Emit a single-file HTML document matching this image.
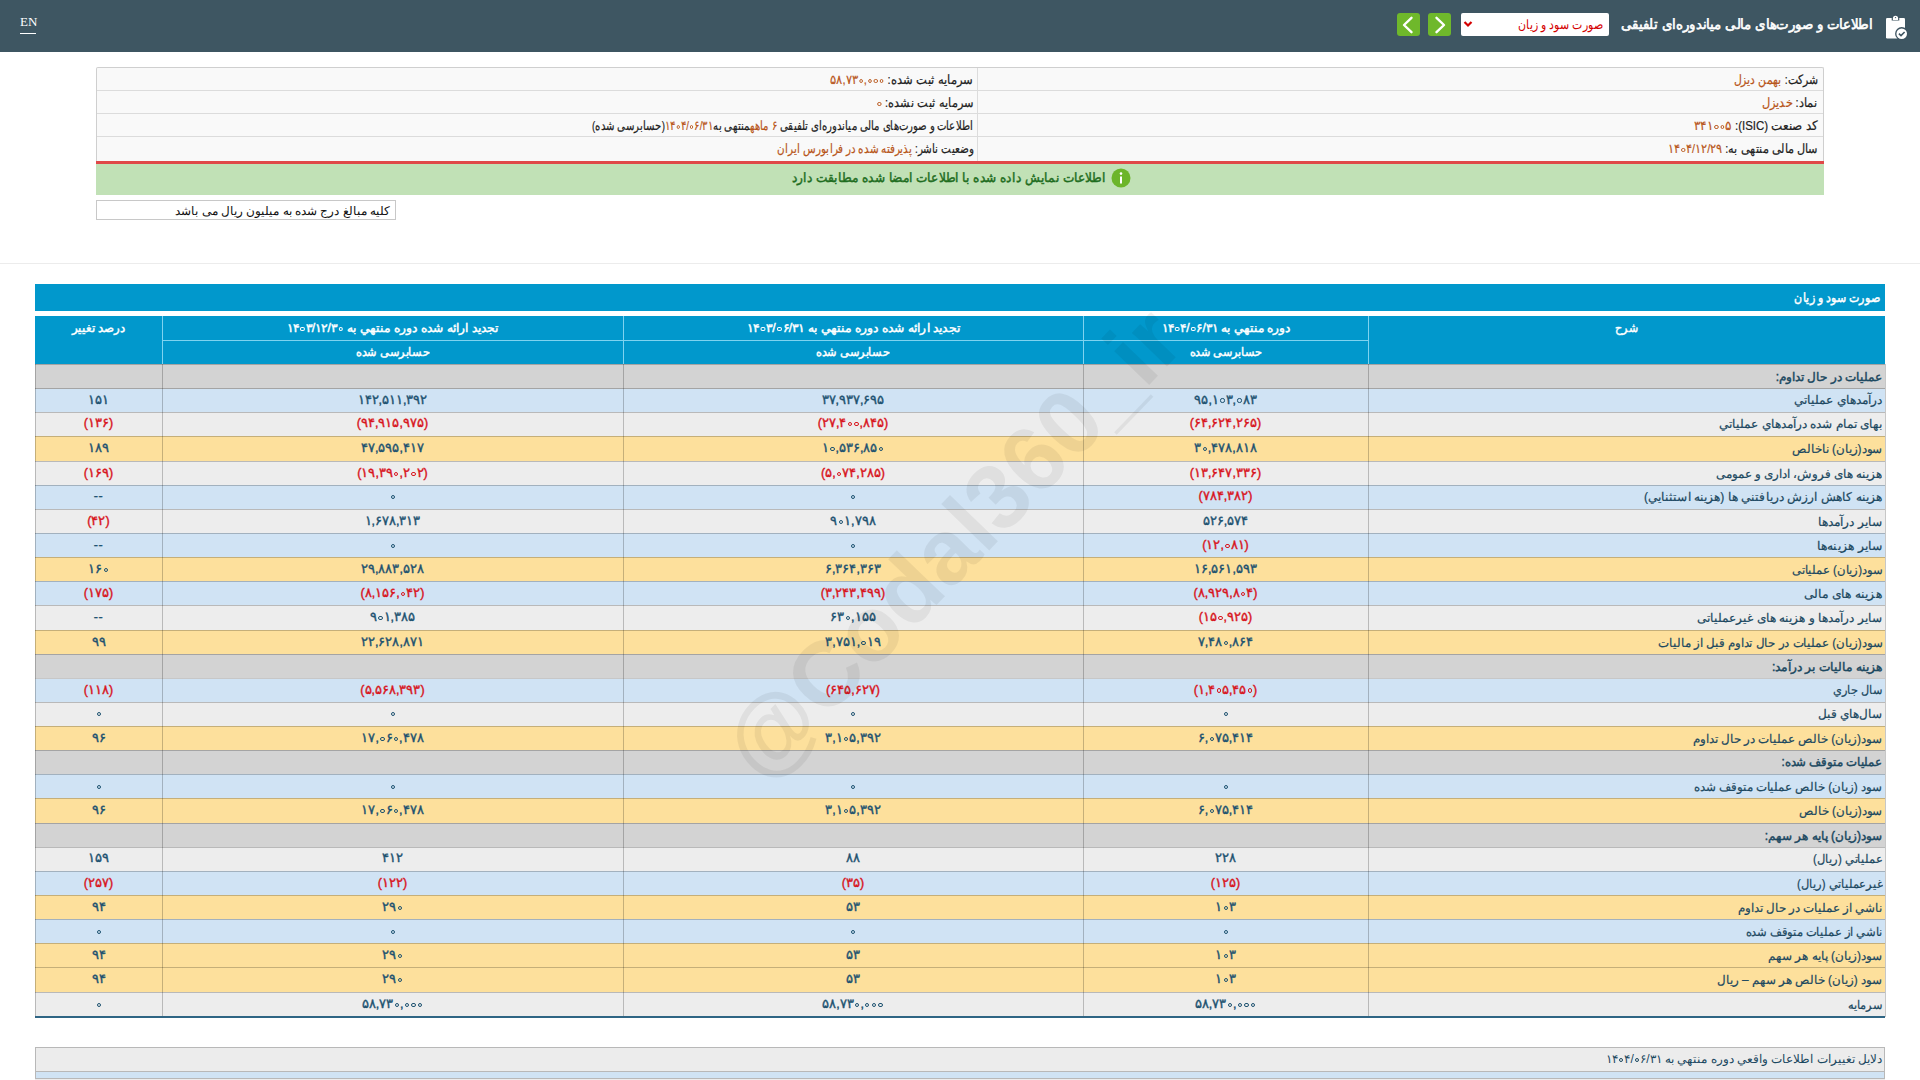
<!DOCTYPE html><html><head><meta charset="utf-8"><title>Codal</title><style>
*{margin:0;padding:0;box-sizing:border-box}
html,body{width:1920px;height:1080px;overflow:hidden;background:#fff;font-family:"Liberation Sans",sans-serif;}
.abs{position:absolute}
.ib{display:inline-block;white-space:nowrap}
.bd{-webkit-text-stroke:0.45px currentColor}
.hdr{left:0;top:0;width:1920px;height:52px;background:#3e5662}
.en{left:20px;top:14px;font-family:"Liberation Serif",serif;font-size:13px;color:#fff;}
.enl{left:20px;top:33px;width:16px;height:1px;background:#fff}
.title{right:47px;top:14px;height:22px;line-height:22px;color:#fff;font-size:13.5px;direction:rtl;white-space:nowrap}
.sel{left:1461px;top:13px;width:148px;height:23px;background:#fff;border-radius:2px;color:#d40000;font-size:13px;direction:rtl;line-height:23px;padding-right:6px;white-space:nowrap}
.btn{top:13px;width:23px;height:23px;background:#6fb82b;border-radius:3px}
.info{left:96px;top:67px;width:1728px;height:94px;background:#f9f9f9;border:1px solid #cfcfcf;border-bottom:none;border-radius:2px 2px 0 0}
.irow{position:absolute;left:0;width:1726px;height:1px;background:#dcdcdc}
.itxt{position:absolute;direction:rtl;white-space:nowrap;font-size:12.5px;color:#222;-webkit-text-stroke:0.2px currentColor;line-height:25px;height:23px}
.itxt b{font-weight:normal;color:#b8561b}
.red{left:96px;top:161px;width:1728px;height:3px;background:#e04848}
.green{left:96px;top:164px;width:1728px;height:31px;background:#c1e1b6}
.gtxt{right:814px;top:162px;height:31px;line-height:31px;direction:rtl;white-space:nowrap;color:#1f6d1f;font-size:13px}
.note{left:96px;top:200px;width:300px;height:20px;border:1px solid #c8c8c8;background:#fff;direction:rtl;font-size:12px;line-height:20px;padding-right:5px;color:#111;white-space:nowrap}
.divl{left:0;top:263px;width:1920px;height:1px;background:#ececec}
.tbar{left:35px;top:284px;width:1850px;height:27px;background:#0198cc;color:#fff;font-size:13px;direction:rtl;line-height:27px;padding-right:5px;white-space:nowrap}
.th{position:absolute;color:#fff;font-size:12px;text-align:center;direction:rtl;white-space:nowrap}
.row{position:absolute;left:35px;width:1850px}
.c{position:absolute;top:0;height:100%;text-align:center;font-size:12.5px;font-weight:normal;color:#1d5270;white-space:nowrap;direction:rtl}
.c.n{color:#d8151d}
.num{direction:ltr;unicode-bidi:bidi-override;display:inline-block;letter-spacing:0.7px;-webkit-text-stroke:0.4px currentColor}
.z{display:inline-block;width:4.3px;height:4.3px;border:1.35px solid currentColor;border-radius:50%;margin:0 1px 0 1.3px;vertical-align:1px}
.nr{unicode-bidi:isolate-override;direction:ltr}
.lbl{position:absolute;top:0.8px;height:100%;right:3px;text-align:right;font-size:12px;color:#1b4860;-webkit-text-stroke:0.2px currentColor;white-space:nowrap;direction:rtl}
.vl{position:absolute;width:1px;background:rgba(0,0,0,0.22)}
.hl{position:absolute;left:35px;width:1850px;height:1px;background:rgba(0,0,0,0.22)}
.wm{left:952px;top:543px;font-family:"Liberation Sans",sans-serif;font-weight:bold;font-size:92px;color:rgba(0,0,0,0.06);transform:translate(-50%,-50%) rotate(-46deg);white-space:nowrap;line-height:1}
</style></head><body>
<div class="abs hdr"></div>
<div class="abs en">EN</div><div class="abs enl"></div>
<div class="abs title"><span id="t1" class="ib bd" style="transform:scaleX(0.9511);transform-origin:100% 50%;-webkit-text-stroke:0.6px #fff">اطلاعات و صورت‌های مالی میاندوره‌ای تلفیقی</span></div>
<div class="abs sel"><span id="t2" class="ib " style="transform:scaleX(0.8431);transform-origin:100% 50%;">صورت سود و زیان</span></div>
<svg class="abs" style="left:1463px;top:20px" width="10" height="8" viewBox="0 0 10 8"><path d="M1.5 2 L5 5.5 L8.5 2" stroke="#d40000" stroke-width="2.2" fill="none"/></svg>
<div class="abs btn" style="left:1397px"></div>
<svg class="abs" style="left:1397px;top:13px" width="23" height="23" viewBox="0 0 23 23"><path d="M14.5 4.8 L7 12 L14.5 19.2" stroke="#fff" stroke-width="2.4" fill="none" stroke-linecap="round" stroke-linejoin="round"/></svg>
<div class="abs btn" style="left:1428px"></div>
<svg class="abs" style="left:1428px;top:13px" width="23" height="23" viewBox="0 0 23 23"><path d="M8.5 4.8 L16 12 L8.5 19.2" stroke="#fff" stroke-width="2.4" fill="none" stroke-linecap="round" stroke-linejoin="round"/></svg>
<svg class="abs" style="left:1883px;top:13px" width="26" height="28" viewBox="0 0 26 28">
<rect x="3" y="5" width="19" height="20.5" rx="1.2" fill="#fff"/>
<path d="M8.7 7.6 V5 a3.8 3.8 0 0 1 7.6 0 V7.6 Z" fill="#3e5461"/>
<path d="M9.9 7 V5.3 a2.6 2.6 0 0 1 5.2 0 V7 Z" fill="#fff"/>
<circle cx="12.5" cy="4.6" r="0.7" fill="#3e5461"/>
<circle cx="18.7" cy="20.7" r="6.6" fill="#3e5461"/>
<circle cx="18.7" cy="20.7" r="5.3" fill="#fff"/>
<path d="M15.9 20.7 L18 22.6 L21.6 19" stroke="#3e5461" stroke-width="1.6" fill="none"/>
</svg>
<div class="abs info">
<div class="irow" style="top:22px"></div>
<div class="irow" style="top:45px"></div>
<div class="irow" style="top:68px"></div>
<div style="position:absolute;left:879.5px;top:0;width:1px;height:93px;background:#dcdcdc"></div>
<div class="itxt" style="right:5px;top:0px"><span id="t3" class="ib " style="transform:scaleX(0.8350);transform-origin:100% 50%;">شرکت: <b>بهمن دیزل</b></span></div>
<div class="itxt" style="right:5px;top:23px"><span id="t4" class="ib " style="transform:scaleX(0.8769);transform-origin:100% 50%;">نماد: <b>خدیزل</b></span></div>
<div class="itxt" style="right:5px;top:46px"><span id="t5" class="ib " style="transform:scaleX(0.9190);transform-origin:100% 50%;">کد صنعت (ISIC): <b><span class="nr">۳۴۱<i class="z"></i><i class="z"></i>۵</span></b></span></div>
<div class="itxt" style="right:5px;top:69px"><span id="t6" class="ib " style="transform:scaleX(0.8664);transform-origin:100% 50%;">سال مالی منتهی به: <b><span class="nr">۱۴<i class="z"></i>۴/۱۲/۲۹</span></b></span></div>
<div class="itxt" style="right:850px;top:0px"><span id="t7" class="ib " style="transform:scaleX(0.8882);transform-origin:100% 50%;">سرمایه ثبت شده: <b><span class="nr">۵۸,۷۳<i class="z"></i>,<i class="z"></i><i class="z"></i><i class="z"></i></span></b></span></div>
<div class="itxt" style="right:850px;top:23px"><span id="t8" class="ib " style="transform:scaleX(0.8715);transform-origin:100% 50%;">سرمایه ثبت نشده: <b><span class="nr"><i class="z"></i></span></b></span></div>
<div class="itxt" style="right:850px;top:46px"><span id="t9" class="ib " style="transform:scaleX(0.7775);transform-origin:100% 50%;">اطلاعات و صورت‌های مالی میاندوره‌ای تلفیقی <b>۶ ماهه</b>منتهی به<b><span class="nr">۱۴<i class="z"></i>۴/<i class="z"></i>۶/۳۱</span></b>(حسابرسی شده)</span></div>
<div class="itxt" style="right:850px;top:69px"><span id="t10" class="ib " style="transform:scaleX(0.7992);transform-origin:100% 50%;">وضعیت ناشر: <b>پذیرفته شده در فرابورس ایران</b></span></div>
</div>
<div class="abs red"></div><div class="abs green"></div>
<div class="abs gtxt"><span id="t11" class="ib bd" style="transform:scaleX(0.9324);transform-origin:100% 50%;">اطلاعات نمایش داده شده با اطلاعات امضا شده مطابقت دارد</span></div>
<svg class="abs" style="left:1111px;top:168px" width="20" height="20" viewBox="0 0 20 20"><circle cx="10" cy="10" r="9.5" fill="#6cb52a"/><rect x="9" y="8.5" width="2" height="7" fill="#fff"/><circle cx="10" cy="5.6" r="1.3" fill="#fff"/></svg>
<div class="abs note"><span id="t12" class="ib " style="">کلیه مبالغ درج شده به میلیون ریال می باشد</span></div>
<div class="abs divl"></div>
<div class="abs tbar"><span id="t13" class="ib bd" style="transform:scaleX(0.8480);transform-origin:100% 50%;">صورت سود و زیان</span></div>
<div class="abs" style="left:35px;top:316px;width:1850px;height:48px;background:#0198cc"></div>
<div class="th" style="left:1368px;top:316px;width:517px;height:24px;line-height:24px"><span id="t14" class="ib bd" style="transform:scaleX(0.9200);transform-origin:50% 50%;">شرح</span></div>
<div class="th" style="left:1083px;top:316px;width:285px;height:24px;line-height:24px"><span id="t15" class="ib bd" style="transform:scaleX(1.0064);transform-origin:50% 50%;">دوره منتهي به <span class="nr">۱۴<i class="z"></i>۴/<i class="z"></i>۶/۳۱</span></span></div>
<div class="th" style="left:623px;top:316px;width:460px;height:24px;line-height:24px"><span id="t16" class="ib bd" style="transform:scaleX(1.0285);transform-origin:50% 50%;">تجدید ارائه شده دوره منتهي به <span class="nr">۱۴<i class="z"></i>۳/<i class="z"></i>۶/۳۱</span></span></div>
<div class="th" style="left:162px;top:316px;width:461px;height:24px;line-height:24px"><span id="t17" class="ib bd" style="transform:scaleX(1.0236);transform-origin:50% 50%;">تجدید ارائه شده دوره منتهي به <span class="nr">۱۴<i class="z"></i>۳/۱۲/۳<i class="z"></i></span></span></div>
<div class="th" style="left:35px;top:316px;width:127px;height:24px;line-height:24px"><span id="t18" class="ib bd" style="transform:scaleX(0.9815);transform-origin:50% 50%;">درصد تغییر</span></div>
<div class="th" style="left:1083px;top:340px;width:285px;height:24px;line-height:24px"><span id="t19" class="ib bd" style="transform:scaleX(0.9351);transform-origin:50% 50%;">حسابرسی شده</span></div>
<div class="th" style="left:623px;top:340px;width:460px;height:24px;line-height:24px"><span id="t20" class="ib bd" style="transform:scaleX(0.9481);transform-origin:50% 50%;">حسابرسی شده</span></div>
<div class="th" style="left:162px;top:340px;width:461px;height:24px;line-height:24px"><span id="t21" class="ib bd" style="transform:scaleX(0.9481);transform-origin:50% 50%;">حسابرسی شده</span></div>
<div class="abs" style="left:162px;top:316px;width:1px;height:48px;background:#7fd3f0"></div>
<div class="abs" style="left:623px;top:316px;width:1px;height:48px;background:#7fd3f0"></div>
<div class="abs" style="left:1083px;top:316px;width:1px;height:48px;background:#7fd3f0"></div>
<div class="abs" style="left:1368px;top:316px;width:1px;height:48px;background:#7fd3f0"></div>
<div class="abs" style="left:162px;top:340px;width:1206px;height:1px;background:#7fd3f0"></div>
<div class="row" style="top:364.00px;height:24.50px;background:#d3d3d3;line-height:24.50px">
<div class="lbl"><span id="t22" class="ib bd" style="">عمليات در حال تداوم:</span></div>
</div>
<div class="row" style="top:388.50px;height:23.90px;background:#d0e3f4;line-height:23.90px">
<div class="lbl"><span id="t23" class="ib " style="transform:scaleX(1.0115);transform-origin:100% 50%;">درآمدهاي عملياتي</span></div>
<div class="c" style="left:1048px;width:285px"><span class="num">۹۵,۱<i class="z"></i>۳,<i class="z"></i>۸۳</span></div>
<div class="c" style="left:588px;width:460px"><span class="num">۳۷,۹۳۷,۶۹۵</span></div>
<div class="c" style="left:127px;width:461px"><span class="num">۱۴۲,۵۱۱,۳۹۲</span></div>
<div class="c" style="left:0px;width:127px"><span class="num">۱۵۱</span></div>
</div>
<div class="hl" style="top:388.00px"></div>
<div class="row" style="top:412.40px;height:23.90px;background:#ededed;line-height:23.90px">
<div class="lbl"><span id="t24" class="ib " style="transform:scaleX(1.0062);transform-origin:100% 50%;">بهاى تمام شده درآمدهاي عملياتي</span></div>
<div class="c n" style="left:1048px;width:285px"><span class="num">(۶۴,۶۲۴,۲۶۵)</span></div>
<div class="c n" style="left:588px;width:460px"><span class="num">(۲۷,۴<i class="z"></i><i class="z"></i>,۸۴۵)</span></div>
<div class="c n" style="left:127px;width:461px"><span class="num">(۹۴,۹۱۵,۹۷۵)</span></div>
<div class="c n" style="left:0px;width:127px"><span class="num">(۱۳۶)</span></div>
</div>
<div class="hl" style="top:411.90px"></div>
<div class="row" style="top:436.30px;height:24.90px;background:#fde09c;line-height:24.90px">
<div class="lbl"><span id="t25" class="ib " style="transform:scaleX(0.9890);transform-origin:100% 50%;">سود(زيان) ناخالص</span></div>
<div class="c" style="left:1048px;width:285px"><span class="num">۳<i class="z"></i>,۴۷۸,۸۱۸</span></div>
<div class="c" style="left:588px;width:460px"><span class="num">۱<i class="z"></i>,۵۳۶,۸۵<i class="z"></i></span></div>
<div class="c" style="left:127px;width:461px"><span class="num">۴۷,۵۹۵,۴۱۷</span></div>
<div class="c" style="left:0px;width:127px"><span class="num">۱۸۹</span></div>
</div>
<div class="hl" style="top:435.80px"></div>
<div class="row" style="top:461.20px;height:24.10px;background:#ededed;line-height:24.10px">
<div class="lbl"><span id="t26" class="ib " style="transform:scaleX(0.9880);transform-origin:100% 50%;">هزينه هاى فروش، ادارى و عمومى</span></div>
<div class="c n" style="left:1048px;width:285px"><span class="num">(۱۳,۶۴۷,۳۳۶)</span></div>
<div class="c n" style="left:588px;width:460px"><span class="num">(۵,<i class="z"></i>۷۴,۲۸۵)</span></div>
<div class="c n" style="left:127px;width:461px"><span class="num">(۱۹,۳۹<i class="z"></i>,۲<i class="z"></i>۲)</span></div>
<div class="c n" style="left:0px;width:127px"><span class="num">(۱۶۹)</span></div>
</div>
<div class="hl" style="top:460.70px"></div>
<div class="row" style="top:485.30px;height:23.95px;background:#d0e3f4;line-height:23.95px">
<div class="lbl"><span id="t27" class="ib " style="transform:scaleX(1.0129);transform-origin:100% 50%;">هزينه كاهش ارزش دريافتني ها (هزينه استثنايي)</span></div>
<div class="c n" style="left:1048px;width:285px"><span class="num">(۷۸۴,۳۸۲)</span></div>
<div class="c" style="left:588px;width:460px"><span class="num"><i class="z"></i></span></div>
<div class="c" style="left:127px;width:461px"><span class="num"><i class="z"></i></span></div>
<div class="c" style="left:0px;width:127px"><span class="num">--</span></div>
</div>
<div class="hl" style="top:484.80px"></div>
<div class="row" style="top:509.25px;height:24.05px;background:#ededed;line-height:24.05px">
<div class="lbl"><span id="t28" class="ib " style="transform:scaleX(1.0159);transform-origin:100% 50%;">ساير درآمدها</span></div>
<div class="c" style="left:1048px;width:285px"><span class="num">۵۲۶,۵۷۴</span></div>
<div class="c" style="left:588px;width:460px"><span class="num">۹<i class="z"></i>۱,۷۹۸</span></div>
<div class="c" style="left:127px;width:461px"><span class="num">۱,۶۷۸,۳۱۳</span></div>
<div class="c n" style="left:0px;width:127px"><span class="num">(۴۲)</span></div>
</div>
<div class="hl" style="top:508.75px"></div>
<div class="row" style="top:533.30px;height:24.00px;background:#d0e3f4;line-height:24.00px">
<div class="lbl"><span id="t29" class="ib " style="transform:scaleX(1.0317);transform-origin:100% 50%;">ساير هزينه‌ها</span></div>
<div class="c n" style="left:1048px;width:285px"><span class="num">(۱۲,<i class="z"></i>۸۱)</span></div>
<div class="c" style="left:588px;width:460px"><span class="num"><i class="z"></i></span></div>
<div class="c" style="left:127px;width:461px"><span class="num"><i class="z"></i></span></div>
<div class="c" style="left:0px;width:127px"><span class="num">--</span></div>
</div>
<div class="hl" style="top:532.80px"></div>
<div class="row" style="top:557.30px;height:24.00px;background:#fde09c;line-height:24.00px">
<div class="lbl"><span id="t30" class="ib " style="transform:scaleX(0.9677);transform-origin:100% 50%;">سود(زيان) عملياتى</span></div>
<div class="c" style="left:1048px;width:285px"><span class="num">۱۶,۵۶۱,۵۹۳</span></div>
<div class="c" style="left:588px;width:460px"><span class="num">۶,۳۶۴,۳۶۳</span></div>
<div class="c" style="left:127px;width:461px"><span class="num">۲۹,۸۸۳,۵۲۸</span></div>
<div class="c" style="left:0px;width:127px"><span class="num">۱۶<i class="z"></i></span></div>
</div>
<div class="hl" style="top:556.80px"></div>
<div class="row" style="top:581.30px;height:24.10px;background:#d0e3f4;line-height:24.10px">
<div class="lbl"><span id="t31" class="ib " style="transform:scaleX(1.0267);transform-origin:100% 50%;">هزينه هاى مالى</span></div>
<div class="c n" style="left:1048px;width:285px"><span class="num">(۸,۹۲۹,۸<i class="z"></i>۴)</span></div>
<div class="c n" style="left:588px;width:460px"><span class="num">(۳,۲۴۳,۴۹۹)</span></div>
<div class="c n" style="left:127px;width:461px"><span class="num">(۸,۱۵۶,<i class="z"></i>۴۲)</span></div>
<div class="c n" style="left:0px;width:127px"><span class="num">(۱۷۵)</span></div>
</div>
<div class="hl" style="top:580.80px"></div>
<div class="row" style="top:605.40px;height:24.90px;background:#ededed;line-height:24.90px">
<div class="lbl"><span id="t32" class="ib " style="transform:scaleX(1.0055);transform-origin:100% 50%;">ساير درآمدها و هزينه هاى غيرعملياتى</span></div>
<div class="c n" style="left:1048px;width:285px"><span class="num">(۱۵<i class="z"></i>,۹۲۵)</span></div>
<div class="c" style="left:588px;width:460px"><span class="num">۶۳<i class="z"></i>,۱۵۵</span></div>
<div class="c" style="left:127px;width:461px"><span class="num">۹<i class="z"></i>۱,۳۸۵</span></div>
<div class="c" style="left:0px;width:127px"><span class="num">--</span></div>
</div>
<div class="hl" style="top:604.90px"></div>
<div class="row" style="top:630.30px;height:24.00px;background:#fde09c;line-height:24.00px">
<div class="lbl"><span id="t33" class="ib " style="transform:scaleX(0.9823);transform-origin:100% 50%;">سود(زيان) عمليات در حال تداوم قبل از ماليات</span></div>
<div class="c" style="left:1048px;width:285px"><span class="num">۷,۴۸<i class="z"></i>,۸۶۴</span></div>
<div class="c" style="left:588px;width:460px"><span class="num">۳,۷۵۱,<i class="z"></i>۱۹</span></div>
<div class="c" style="left:127px;width:461px"><span class="num">۲۲,۶۲۸,۸۷۱</span></div>
<div class="c" style="left:0px;width:127px"><span class="num">۹۹</span></div>
</div>
<div class="hl" style="top:629.80px"></div>
<div class="row" style="top:654.30px;height:24.20px;background:#d3d3d3;line-height:24.20px">
<div class="lbl"><span id="t34" class="ib bd" style="transform:scaleX(1.0187);transform-origin:100% 50%;">هزينه ماليات بر درآمد:</span></div>
</div>
<div class="hl" style="top:653.80px"></div>
<div class="row" style="top:678.50px;height:23.90px;background:#d0e3f4;line-height:23.90px">
<div class="lbl"><span id="t35" class="ib " style="transform:scaleX(0.9423);transform-origin:100% 50%;">سال جاري</span></div>
<div class="c n" style="left:1048px;width:285px"><span class="num">(۱,۴<i class="z"></i>۵,۴۵<i class="z"></i>)</span></div>
<div class="c n" style="left:588px;width:460px"><span class="num">(۶۴۵,۶۲۷)</span></div>
<div class="c n" style="left:127px;width:461px"><span class="num">(۵,۵۶۸,۳۹۳)</span></div>
<div class="c n" style="left:0px;width:127px"><span class="num">(۱۱۸)</span></div>
</div>
<div class="hl" style="top:678.00px"></div>
<div class="row" style="top:702.40px;height:23.85px;background:#ededed;line-height:23.85px">
<div class="lbl"><span id="t36" class="ib " style="">سال‌هاي قبل</span></div>
<div class="c" style="left:1048px;width:285px"><span class="num"><i class="z"></i></span></div>
<div class="c" style="left:588px;width:460px"><span class="num"><i class="z"></i></span></div>
<div class="c" style="left:127px;width:461px"><span class="num"><i class="z"></i></span></div>
<div class="c" style="left:0px;width:127px"><span class="num"><i class="z"></i></span></div>
</div>
<div class="hl" style="top:701.90px"></div>
<div class="row" style="top:726.25px;height:24.05px;background:#fde09c;line-height:24.05px">
<div class="lbl"><span id="t37" class="ib " style="transform:scaleX(0.9894);transform-origin:100% 50%;">سود(زيان) خالص عمليات در حال تداوم</span></div>
<div class="c" style="left:1048px;width:285px"><span class="num">۶,<i class="z"></i>۷۵,۴۱۴</span></div>
<div class="c" style="left:588px;width:460px"><span class="num">۳,۱<i class="z"></i>۵,۳۹۲</span></div>
<div class="c" style="left:127px;width:461px"><span class="num">۱۷,<i class="z"></i>۶<i class="z"></i>,۴۷۸</span></div>
<div class="c" style="left:0px;width:127px"><span class="num">۹۶</span></div>
</div>
<div class="hl" style="top:725.75px"></div>
<div class="row" style="top:750.30px;height:23.95px;background:#d3d3d3;line-height:23.95px">
<div class="lbl"><span id="t38" class="ib bd" style="transform:scaleX(0.9755);transform-origin:100% 50%;">عمليات متوقف شده:</span></div>
</div>
<div class="hl" style="top:749.80px"></div>
<div class="row" style="top:774.25px;height:24.05px;background:#d0e3f4;line-height:24.05px">
<div class="lbl"><span id="t39" class="ib " style="transform:scaleX(0.9841);transform-origin:100% 50%;">سود (زيان) خالص عمليات متوقف شده</span></div>
<div class="c" style="left:1048px;width:285px"><span class="num"><i class="z"></i></span></div>
<div class="c" style="left:588px;width:460px"><span class="num"><i class="z"></i></span></div>
<div class="c" style="left:127px;width:461px"><span class="num"><i class="z"></i></span></div>
<div class="c" style="left:0px;width:127px"><span class="num"><i class="z"></i></span></div>
</div>
<div class="hl" style="top:773.75px"></div>
<div class="row" style="top:798.30px;height:24.80px;background:#fde09c;line-height:24.80px">
<div class="lbl"><span id="t40" class="ib " style="transform:scaleX(0.9881);transform-origin:100% 50%;">سود(زيان) خالص</span></div>
<div class="c" style="left:1048px;width:285px"><span class="num">۶,<i class="z"></i>۷۵,۴۱۴</span></div>
<div class="c" style="left:588px;width:460px"><span class="num">۳,۱<i class="z"></i>۵,۳۹۲</span></div>
<div class="c" style="left:127px;width:461px"><span class="num">۱۷,<i class="z"></i>۶<i class="z"></i>,۴۷۸</span></div>
<div class="c" style="left:0px;width:127px"><span class="num">۹۶</span></div>
</div>
<div class="hl" style="top:797.80px"></div>
<div class="row" style="top:823.10px;height:24.30px;background:#d3d3d3;line-height:24.30px">
<div class="lbl"><span id="t41" class="ib bd" style="">سود(زيان) پايه هر سهم:</span></div>
</div>
<div class="hl" style="top:822.60px"></div>
<div class="row" style="top:847.40px;height:23.80px;background:#ededed;line-height:23.80px">
<div class="lbl"><span id="t42" class="ib " style="transform:scaleX(0.9583);transform-origin:100% 50%;">عملياتي (ريال)</span></div>
<div class="c" style="left:1048px;width:285px"><span class="num">۲۲۸</span></div>
<div class="c" style="left:588px;width:460px"><span class="num">۸۸</span></div>
<div class="c" style="left:127px;width:461px"><span class="num">۴۱۲</span></div>
<div class="c" style="left:0px;width:127px"><span class="num">۱۵۹</span></div>
</div>
<div class="hl" style="top:846.90px"></div>
<div class="row" style="top:871.20px;height:24.00px;background:#d0e3f4;line-height:24.00px">
<div class="lbl"><span id="t43" class="ib " style="transform:scaleX(0.9551);transform-origin:100% 50%;">غيرعملياتي (ريال)</span></div>
<div class="c n" style="left:1048px;width:285px"><span class="num">(۱۲۵)</span></div>
<div class="c n" style="left:588px;width:460px"><span class="num">(۳۵)</span></div>
<div class="c n" style="left:127px;width:461px"><span class="num">(۱۲۲)</span></div>
<div class="c n" style="left:0px;width:127px"><span class="num">(۲۵۷)</span></div>
</div>
<div class="hl" style="top:870.70px"></div>
<div class="row" style="top:895.20px;height:24.00px;background:#fde09c;line-height:24.00px">
<div class="lbl"><span id="t44" class="ib " style="transform:scaleX(0.9861);transform-origin:100% 50%;">ناشي از عمليات در حال تداوم</span></div>
<div class="c" style="left:1048px;width:285px"><span class="num">۱<i class="z"></i>۳</span></div>
<div class="c" style="left:588px;width:460px"><span class="num">۵۳</span></div>
<div class="c" style="left:127px;width:461px"><span class="num">۲۹<i class="z"></i></span></div>
<div class="c" style="left:0px;width:127px"><span class="num">۹۴</span></div>
</div>
<div class="hl" style="top:894.70px"></div>
<div class="row" style="top:919.20px;height:24.15px;background:#d0e3f4;line-height:24.15px">
<div class="lbl"><span id="t45" class="ib " style="transform:scaleX(0.9603);transform-origin:100% 50%;">ناشي از عمليات متوقف شده</span></div>
<div class="c" style="left:1048px;width:285px"><span class="num"><i class="z"></i></span></div>
<div class="c" style="left:588px;width:460px"><span class="num"><i class="z"></i></span></div>
<div class="c" style="left:127px;width:461px"><span class="num"><i class="z"></i></span></div>
<div class="c" style="left:0px;width:127px"><span class="num"><i class="z"></i></span></div>
</div>
<div class="hl" style="top:918.70px"></div>
<div class="row" style="top:943.35px;height:24.05px;background:#fde09c;line-height:24.05px">
<div class="lbl"><span id="t46" class="ib " style="">سود(زيان) پايه هر سهم</span></div>
<div class="c" style="left:1048px;width:285px"><span class="num">۱<i class="z"></i>۳</span></div>
<div class="c" style="left:588px;width:460px"><span class="num">۵۳</span></div>
<div class="c" style="left:127px;width:461px"><span class="num">۲۹<i class="z"></i></span></div>
<div class="c" style="left:0px;width:127px"><span class="num">۹۴</span></div>
</div>
<div class="hl" style="top:942.85px"></div>
<div class="row" style="top:967.40px;height:24.75px;background:#fde09c;line-height:24.75px">
<div class="lbl"><span id="t47" class="ib " style="transform:scaleX(0.9879);transform-origin:100% 50%;">سود (زيان) خالص هر سهم – ريال</span></div>
<div class="c" style="left:1048px;width:285px"><span class="num">۱<i class="z"></i>۳</span></div>
<div class="c" style="left:588px;width:460px"><span class="num">۵۳</span></div>
<div class="c" style="left:127px;width:461px"><span class="num">۲۹<i class="z"></i></span></div>
<div class="c" style="left:0px;width:127px"><span class="num">۹۴</span></div>
</div>
<div class="hl" style="top:966.90px"></div>
<div class="row" style="top:992.15px;height:24.35px;background:#ededed;line-height:24.35px">
<div class="lbl"><span id="t48" class="ib " style="transform:scaleX(0.9444);transform-origin:100% 50%;">سرمايه</span></div>
<div class="c" style="left:1048px;width:285px"><span class="num">۵۸,۷۳<i class="z"></i>,<i class="z"></i><i class="z"></i><i class="z"></i></span></div>
<div class="c" style="left:588px;width:460px"><span class="num">۵۸,۷۳<i class="z"></i>,<i class="z"></i><i class="z"></i><i class="z"></i></span></div>
<div class="c" style="left:127px;width:461px"><span class="num">۵۸,۷۳<i class="z"></i>,<i class="z"></i><i class="z"></i><i class="z"></i></span></div>
<div class="c" style="left:0px;width:127px"><span class="num"><i class="z"></i></span></div>
</div>
<div class="hl" style="top:991.65px"></div>
<div class="vl" style="left:35px;top:364.0px;height:652.5px"></div>
<div class="vl" style="left:162px;top:364.0px;height:652.5px"></div>
<div class="vl" style="left:623px;top:364.0px;height:652.5px"></div>
<div class="vl" style="left:1083px;top:364.0px;height:652.5px"></div>
<div class="vl" style="left:1368px;top:364.0px;height:652.5px"></div>
<div class="vl" style="left:1885px;top:364.0px;height:652.5px"></div>
<div class="hl" style="top:363.5px"></div>
<div class="abs" style="left:35px;top:1016px;width:1850px;height:1.5px;background:#2f6584"></div>
<div class="abs" style="left:35px;top:1047px;width:1850px;height:25px;background:#ececec;border:1px solid #b8b8b8"></div>
<div class="abs" style="right:38px;top:1047px;height:25px;line-height:25px;direction:rtl;font-size:12px;color:#1b4860;white-space:nowrap"><span id="t49" class="ib " style="">دلایل تغییرات اطلاعات واقعي دوره منتهي به <span class="nr">۱۴<i class="z"></i>۴/<i class="z"></i>۶/۳۱</span></span></div>
<div class="abs" style="left:35px;top:1072px;width:1850px;height:8px;background:#d0e3f4;border-left:1px solid #b8b8b8;border-right:1px solid #b8b8b8"></div>
<div class="abs" style="left:35px;top:1078px;width:1850px;height:1px;background:#b8b8b8"></div>
<div class="abs" style="left:35px;top:1079px;width:1850px;height:1px;background:#ececec"></div>
<div class="abs wm">@Codal360_ir</div>
</body></html>
